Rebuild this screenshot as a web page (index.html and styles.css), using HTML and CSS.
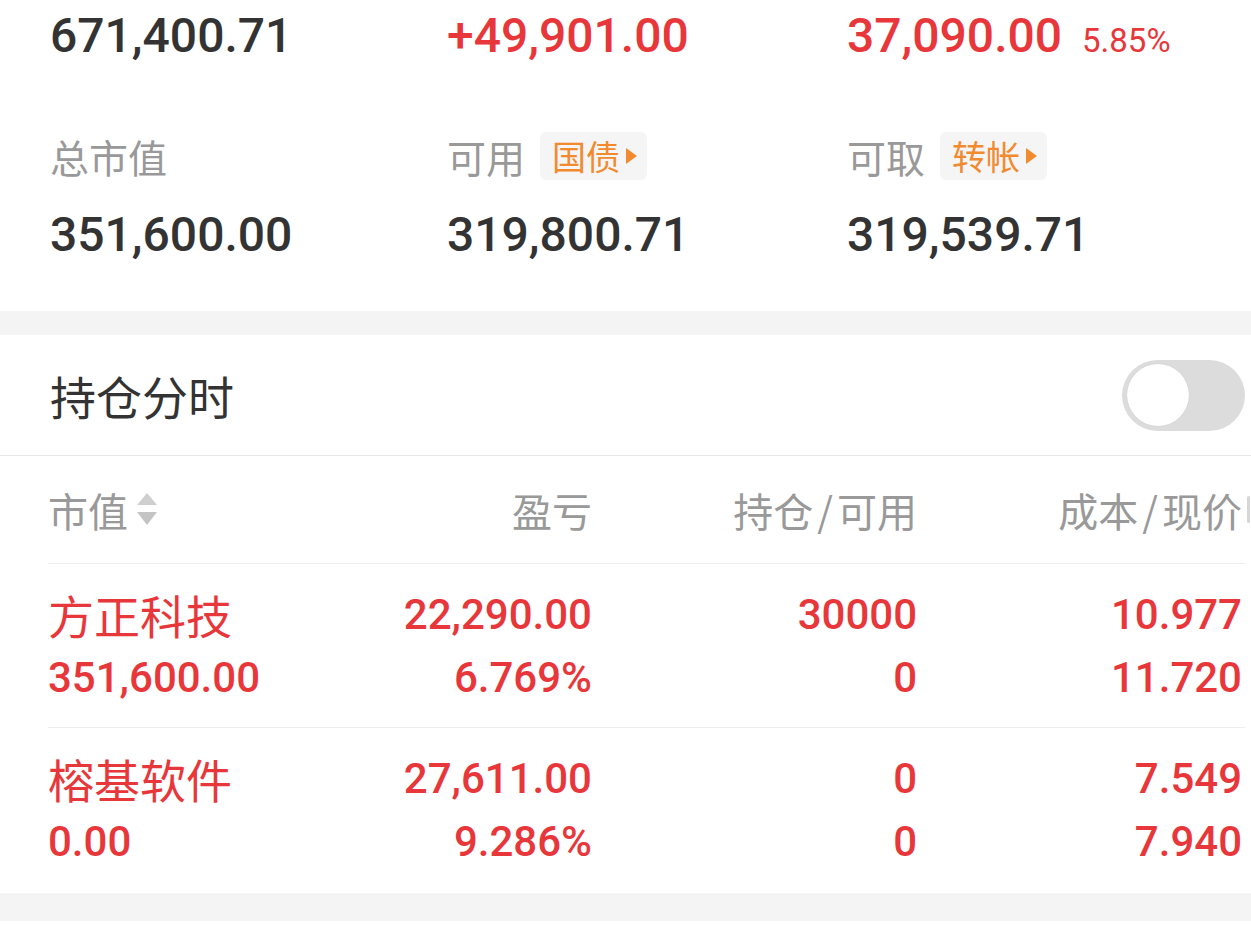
FILE: index.html
```html
<!DOCTYPE html>
<html lang="zh-CN">
<head>
    <meta charset="UTF-8">
    <meta name="viewport" content="width=device-width, initial-scale=1.0">
    <title>持仓</title>
    <link rel="stylesheet" href="styles.css">
</head>
<body>
    <div class="summary">
        <div class="summary-row">
            <div class="cell">
                <div class="value">671,400.71</div>
            </div>
            <div class="cell">
                <div class="value up">+49,901.00</div>
            </div>
            <div class="cell">
                <div class="value up">37,090.00<span class="ratio">5.85%</span></div>
            </div>
        </div>
        <div class="summary-row">
            <div class="cell">
                <div class="label">总市值</div>
                <div class="value">351,600.00</div>
            </div>
            <div class="cell">
                <div class="label">可用<a class="tag">国债<i class="tag-arrow"></i></a></div>
                <div class="value">319,800.71</div>
            </div>
            <div class="cell">
                <div class="label">可取<a class="tag">转帐<i class="tag-arrow"></i></a></div>
                <div class="value">319,539.71</div>
            </div>
        </div>
    </div>

    <div class="gap"></div>

    <div class="section-header">
        <h2>持仓分时</h2>
        <div class="switch"></div>
    </div>

    <div class="table">
        <div class="table-row table-head">
            <div class="col col-left">市值
                <svg class="sort" width="22" height="36" viewBox="0 0 22 36">
                    <polygon points="1,13 11,1 21,13" fill="#cfcfcf"/>
                    <polygon points="1,20 21,20 11,33" fill="#c4c4c4"/>
                </svg>
            </div>
            <div class="col">盈亏</div>
            <div class="col">持仓<span class="slash">/</span>可用</div>
            <div class="col">成本<span class="slash">/</span>现价</div>
            <div class="col col-extra"><span class="edge"></span></div>
        </div>

        <div class="table-row stock up">
            <div class="col col-left">
                <div class="name">方正科技</div>
                <div class="num">351,600.00</div>
            </div>
            <div class="col">
                <div class="num">22,290.00</div>
                <div class="num">6.769%</div>
            </div>
            <div class="col">
                <div class="num">30000</div>
                <div class="num">0</div>
            </div>
            <div class="col">
                <div class="num">10.977</div>
                <div class="num">11.720</div>
            </div>
        </div>

        <div class="table-row stock up">
            <div class="col col-left">
                <div class="name">榕基软件</div>
                <div class="num">0.00</div>
            </div>
            <div class="col">
                <div class="num">27,611.00</div>
                <div class="num">9.286%</div>
            </div>
            <div class="col">
                <div class="num">0</div>
                <div class="num">0</div>
            </div>
            <div class="col">
                <div class="num">7.549</div>
                <div class="num">7.940</div>
            </div>
        </div>
    </div>

    <div class="gap gap-bottom"></div>
</body>
</html>
```

FILE: styles.css
```css
* {
    margin: 0;
    padding: 0;
    box-sizing: border-box;
}

body {
    font-family: Roboto, "Noto Sans CJK SC", sans-serif;
    background: #fff;
    color: #333;
    width: 1251px;
    height: 925px;
    overflow: hidden;
}

.up {
    color: #e8373b;
}

/* summary */
.summary {
    padding: 6px 0 46px 50px;
}

.summary-row {
    display: grid;
    grid-template-columns: 397px 400px 1fr;
}

.summary-row + .summary-row {
    margin-top: 61px;
}

.value {
    font-size: 48px;
    font-weight: 500;
    line-height: 60px;
    white-space: nowrap;
}

.ratio {
    font-size: 33px;
    font-weight: 400;
    margin-left: 20px;
}

.label {
    display: flex;
    align-items: center;
    height: 48px;
    margin-bottom: 25px;
    font-family: "Noto Sans CJK SC", sans-serif;
    font-size: 39px;
    line-height: 44px;
    color: #999;
}

.tag {
    display: inline-flex;
    align-items: center;
    height: 48px;
    margin-left: 15px;
    padding: 0 10px 0 12px;
    background: #f5f5f5;
    border-radius: 6px;
    font-size: 34px;
    color: #f28a30;
}

.tag-arrow {
    width: 0;
    height: 0;
    margin-left: 6px;
    border-left: 11px solid #f28a30;
    border-top: 8px solid transparent;
    border-bottom: 8px solid transparent;
}

.gap {
    height: 24px;
    background: #f4f4f4;
}

.gap-bottom {
    height: 28px;
}

/* section header */
.section-header {
    display: flex;
    align-items: center;
    justify-content: space-between;
    height: 121px;
    padding: 0 6px 0 50px;
    border-bottom: 1px solid #e6e6e6;
}

.section-header h2 {
    font-family: "Noto Sans CJK SC", sans-serif;
    font-size: 46px;
    font-weight: 400;
    color: #333;
}

.switch {
    position: relative;
    width: 123px;
    height: 71px;
    border-radius: 36px;
    background: #dcdcdc;
}

.switch::after {
    content: "";
    position: absolute;
    left: 5px;
    top: 4px;
    width: 62px;
    height: 62px;
    border-radius: 50%;
    background: #fff;
    box-shadow: 0 0 1px rgba(0, 0, 0, 0.15);
}

/* table */
.table {
    margin-left: 48px;
    width: 1197px;
}

.table-row {
    display: grid;
    grid-template-columns: 273px 271px 325px 325px 300px;
    border-bottom: 1px solid #eeeeee;
}

.col {
    text-align: right;
    white-space: nowrap;
}

.col-left {
    text-align: left;
}

.col-extra {
    padding-left: 5px;
}

.edge {
    display: block;
    width: 3px;
    height: 27px;
    background: #d6d6d6;
    border-radius: 2px;
}

.table-head {
    height: 108px;
    align-items: center;
    font-family: "Noto Sans CJK SC", sans-serif;
    font-size: 40px;
    color: #999;
}

.table-head .col-left {
    display: flex;
    align-items: center;
}

.slash {
    padding: 0 4px;
}

.sort {
    margin-left: 8px;
}

.stock {
    padding: 19px 0 18px;
}

.stock:last-child {
    border-bottom: none;
    padding-bottom: 20px;
}

.name {
    font-family: "Noto Sans CJK SC", sans-serif;
    font-size: 46px;
    line-height: 63px;
}

.num {
    font-size: 42px;
    font-weight: 500;
    line-height: 63px;
}
```
